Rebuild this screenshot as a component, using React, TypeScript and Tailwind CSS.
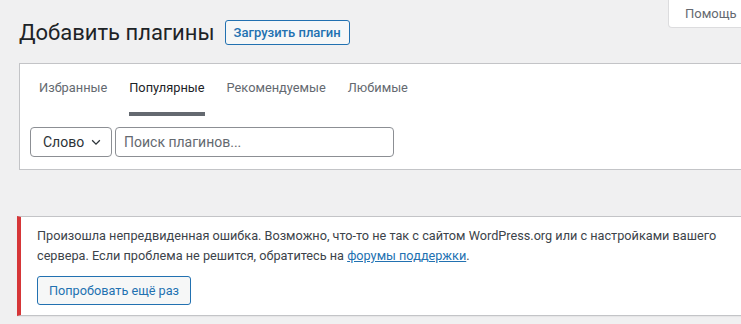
const tabs = ['Избранные', 'Популярные', 'Рекомендуемые', 'Любимые']

export default function App() {
  return (
    <div
      className="relative h-[324px] w-full overflow-hidden bg-[#f0f0f1] text-[13px] text-[#3c434a]"
      style={{ fontFamily: 'Roboto, "Noto Sans", sans-serif' }}
    >
      {/* Help tab */}
      <div className="absolute left-[668px] top-0 flex h-[28px] w-[100px] items-center rounded-bl-[4px] border border-t-0 border-[#dcdcde] bg-white pl-[16px] text-[#646970]">
        Помощь
      </div>

      {/* Heading */}
      <div className="flex items-center pl-[19px] pt-[20px]">
        <h1 className="text-[22px] leading-[25px] text-[#1d2327]">Добавить плагины</h1>
        <button className="ml-[10px] h-[25px] rounded-[3px] border border-[#2271b1] bg-[#f6f7f7] px-[8px] text-[13px] font-medium text-[#2271b1]">
          Загрузить плагин
        </button>
      </div>

      {/* Filter box */}
      <div className="ml-[19px] mt-[18px] w-[760px] border border-[#c3c4c7] bg-white">
        <div className="flex gap-[22px] pl-[19px]">
          {tabs.map((t, i) => (
            <div
              key={t}
              className={`border-b-4 pb-[15px] pt-[15px] text-[12.8px] leading-[18px] ${
                i === 1 ? 'border-[#646970] text-[#1d2327]' : 'border-transparent text-[#646970]'
              }`}
            >
              {t}
            </div>
          ))}
        </div>
        <div className="flex gap-[3px] pb-[12px] pl-[10px] pt-[11px]">
          <div className="flex h-[30px] w-[82px] items-center justify-between rounded-[4px] border border-[#8c8f94] pl-[12px] pr-[8px] text-[14px] text-[#2c3338]">
            Слово
            <svg width="14" height="14" viewBox="0 0 20 20" fill="none" stroke="#2c3338" strokeWidth="1.8">
              <path d="M4.5 7.5l5.5 5.5 5.5-5.5" />
            </svg>
          </div>
          <div className="flex h-[30px] w-[279px] items-center rounded-[4px] border border-[#8c8f94] pl-[8px] text-[14px] text-[#646970]">
            Поиск плагинов...
          </div>
        </div>
      </div>

      {/* Error notice */}
      <div className="ml-[17px] mt-[46px] w-[760px] border border-l-4 border-[#c3c4c7] border-l-[#d63638] bg-white pb-[10px] pl-[16px] pt-[9px] shadow-[0_1px_1px_rgba(0,0,0,0.04)]">
        <p className="text-[12.7px] leading-[20px] text-[#3c434a]">
          <span className="block whitespace-nowrap">
            Произошла непредвиденная ошибка. Возможно, что-то не так с сайтом WordPress.org или с настройками вашего
          </span>
          <span className="block whitespace-nowrap">
            <span>сервера. Если проблема не решится, обратитесь на </span>
            <a href="#" className="text-[#2271b1] underline">
              форумы поддержки
            </a>
            <span>.</span>
          </span>
        </p>
        <button className="mt-[10px] h-[29px] rounded-[3px] border border-[#2271b1] bg-[#f6f7f7] px-[11px] text-[12.7px] text-[#2271b1]">
          Попробовать ещё раз
        </button>
      </div>
    </div>
  )
}
